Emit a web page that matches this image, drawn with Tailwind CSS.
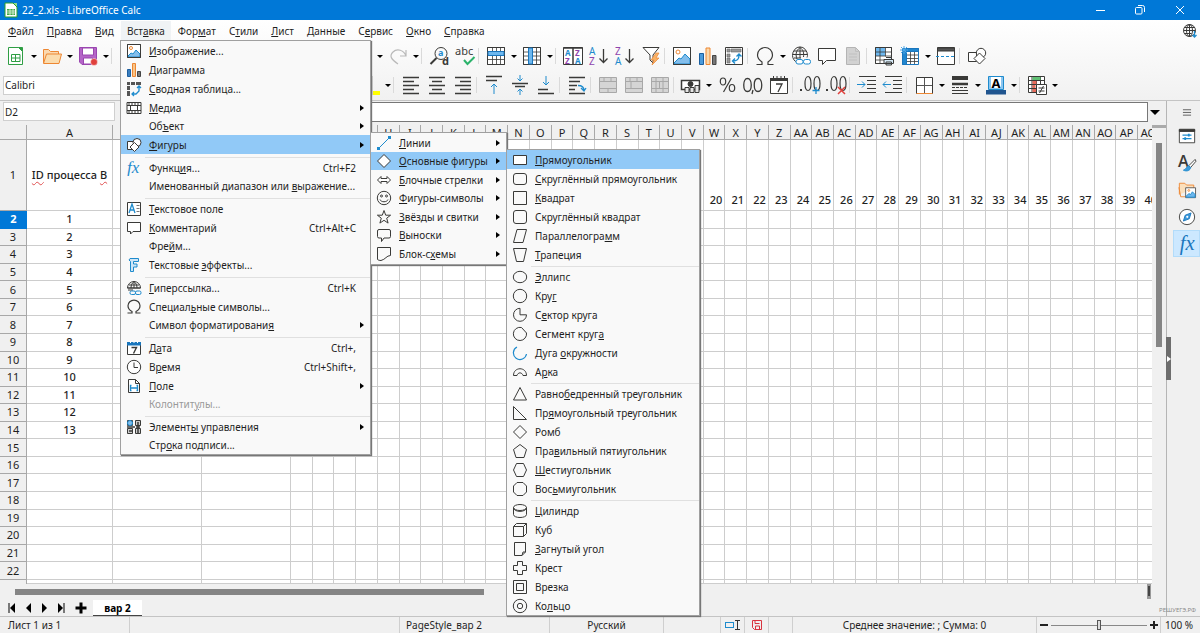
<!DOCTYPE html>
<html lang="ru">
<head>
    <meta charset="UTF-8">
    <meta name="viewport" content="width=device-width, initial-scale=1.0">
    <title>22_2.xls - LibreOffice Calc</title>
    <script src="https://cdn.jsdelivr.net/npm/@tailwindcss/browser@4"></script>
</head>
<body class="h-screen overflow-hidden flex flex-col bg-[#f0f0f0] text-[#1f1f1f] text-[10px] leading-[16px] font-['Noto_Sans','Open_Sans',sans-serif]">
    <!-- Title bar -->
    <header class="h-5 shrink-0 bg-[#0078d7] text-white flex items-center">
        <svg class="ml-1 mr-1 w-3.5 h-4" viewBox="0 0 14 16"><path d="M1 1h8l4 4v10H1z" fill="#fff"/><path d="M9 1h4v4z" fill="#8fdc8f"/><path d="M1 1h8l4 4v10H1z" fill="none" stroke="#2aa02a"/><path d="M3 7h8v6H3z" fill="#43a843"/><path d="M3 9h8M3 11h8M6 7v6M9 7v6" stroke="#fff" stroke-width=".7"/></svg>
        <h1>22_2.xls - LibreOffice Calc</h1>
        <div class="ml-auto flex h-full">
            <button class="w-10 grid place-items-center" aria-label="Свернуть"><svg class="w-3 h-3" viewBox="0 0 12 12"><path d="M2 6.5h9" stroke="#fff"/></svg></button>
            <button class="w-10 grid place-items-center" aria-label="Восстановить"><svg class="w-3 h-3" viewBox="0 0 12 12" fill="none" stroke="#fff"><rect x="1.5" y="3.5" width="6.5" height="6.5" rx="1"/><path d="M4 1.5h4.5a2 2 0 0 1 2 2V8"/></svg></button>
            <button class="w-10 grid place-items-center" aria-label="Закрыть"><svg class="w-3 h-3" viewBox="0 0 12 12"><path d="M2 2l8 8M10 2l-8 8" stroke="#fff"/></svg></button>
        </div>
    </header>

    <!-- Menu bar and toolbars -->
    <div class="shrink-0 bg-linear-to-b from-white to-[#f1f1f1] border-b border-[#c4c4c4]">
        <nav class="flex items-center h-[22px] pl-0.5 relative">
            <div id="menubar" class="flex gap-px h-5"></div>
            <button class="ml-auto mr-0.5" aria-label="Обновления"><svg class="w-4 h-4" viewBox="0 0 16 16" fill="none" stroke="#3a3a38"><circle cx="7.5" cy="7.5" r="6"/><ellipse cx="7.5" cy="7.5" rx="3" ry="6"/><path d="M1.500 7.500h12M2.500 4.500h10M2.500 10.500h7M7.500 1.500v12"/><path d="M12.500 8v6M10.500 12l2 2 2-2" stroke="#1e8bcd" stroke-width="1.300"/></svg></button>
        </nav>
        <div id="toolbar-main" class="flex items-center h-7"></div>
        <div class="flex items-center h-[30px]">
            <input class="ml-[3px] w-[370px] h-[19px] border border-[#cfcfcf] bg-white pl-px outline-none" aria-label="Шрифт" value="Calibri">
            <div id="toolbar-format" class="flex items-center"></div>
        </div>
    </div>

    <!-- Workspace -->
    <div class="flex-1 min-h-0 flex">
        <main class="flex-1 min-w-0 flex flex-col">
            <div class="flex items-start pt-px h-6 shrink-0">
                <input class="ml-[3px] w-[112px] h-[19px] border border-[#cfcfcf] bg-white pl-px outline-none" aria-label="Поле имени" value="D2">
                <span class="w-10"></span>
                <input class="flex-1 h-5 border border-[#777] bg-white outline-none" aria-label="Строка ввода">
                <button class="w-[18px] h-5 pr-1 grid place-items-center" aria-label="Развернуть"><svg class="w-2.5 h-[5px]" viewBox="0 0 10 5"><path d="M0 0h10L5 5z"/></svg></button>
            </div>
            <div class="flex-1 min-h-0 flex">
                <div class="flex-1 min-w-0 overflow-hidden bg-white">
                    <table id="sheet" class="table-fixed border-separate border-spacing-0 w-[calc(100%+8px)] h-[459px] text-[11px]"></table>
                </div>
                <div class="w-[14px] flex flex-col items-center">
                    <span class="w-full h-[3px] bg-[#aaa]"></span>
                    <span class="mt-[15px] w-1.5 h-[204px] bg-[#858585]"></span>
                </div>
            </div>
            <div class="h-[15px] shrink-0 flex items-center">
                <span class="ml-[15px] w-[469px] h-1.5 bg-[#858585]"></span>
                <span class="ml-auto mr-[15px] w-1 h-[15px] bg-[#999] border-x border-[#999]"><i class="block mx-auto mt-0.5 w-0.5 h-2.5 bg-[#444]"></i></span>
            </div>
            <div class="h-[17px] shrink-0 flex items-center">
                <button class="ml-1 w-4 grid place-items-center" aria-label="Первый лист"><svg class="w-2.5 h-2.5" viewBox="0 0 10 10"><path d="M2 0v10" stroke="#000"/><path d="M8 0v10L3 5z"/></svg></button>
                <button class="ml-px w-4 grid place-items-center" aria-label="Предыдущий лист"><svg class="w-2.5 h-2.5" viewBox="0 0 10 10"><path d="M7 0v10L2 5z"/></svg></button>
                <button class="w-4 grid place-items-center" aria-label="Следующий лист"><svg class="w-2.5 h-2.5" viewBox="0 0 10 10"><path d="M2 0v10l5-5z"/></svg></button>
                <button class="w-4 grid place-items-center" aria-label="Последний лист"><svg class="w-2.5 h-2.5" viewBox="0 0 10 10"><path d="M8 0v10" stroke="#000"/><path d="M2 0v10l5-5z"/></svg></button>
                <button class="ml-1 w-4 grid place-items-center" aria-label="Добавить лист"><svg class="w-3 h-3" viewBox="0 0 12 12"><path d="M6 .5v11M.5 6h11" stroke="#000" stroke-width="3"/></svg></button>
                <button class="ml-1 w-[49px] h-4 bg-white border-b border-[#444] font-bold text-black">вар 2</button>
            </div>
        </main>
        <!-- Sidebar -->
        <aside class="relative w-[34px] border-l border-[#b5b5b5] flex flex-col items-end">
            <button class="absolute -left-px top-[236px] w-[5px] h-[43px] bg-[#6d6d6d] grid place-items-center" aria-label="Скрыть панель"><svg class="w-1 h-1.5" viewBox="0 0 4 6"><path d="M0 0v6l4-3z" fill="#fff"/></svg></button>
            <div id="sidebar" class="flex flex-col w-[27px]"></div>
            <span class="absolute right-1 bottom-[2px] text-[6px] leading-[8px] text-[#8a8a8a]">РЕШУЕГЭ.РФ</span>
        </aside>
    </div>

    <!-- Status bar -->
    <footer class="h-[17px] shrink-0 border-t border-[#c4c4c4] flex items-center">
        <span class="w-[130px] pl-2 border-r border-[#cfcfcf]">Лист 1 из 1</span>
        <span class="w-[270px] h-4 border-r border-[#cfcfcf]"></span>
        <span class="w-[150px] pl-1.5 border-r border-[#cfcfcf]">PageStyle_вар 2</span>
        <span class="w-[114px] text-center border-r border-[#cfcfcf]">Русский</span>
        <span class="w-[57px] h-4 border-r border-[#cfcfcf]"></span>
        <span class="w-6 h-4 border-r border-[#cfcfcf] grid place-items-center"><svg class="w-4 h-3" viewBox="0 0 16 12" fill="none"><rect x=".5" y="3.500" width="8" height="5" stroke="#1e8bcd"/><path d="M10 1.500h5M10 10.500h5M12.500 1.500v9" stroke="#333"/></svg></span>
        <span class="w-6 h-4 border-r border-[#cfcfcf] grid place-items-center"><svg class="w-2.5 h-2.5" viewBox="0 0 10 10" fill="none" stroke="#d9333f"><path d="M.5.5h9v9h-7l-2-2zM3 .5v3h4.500M3.500 9V6h4v3"/></svg></span>
        <span class="w-6 h-4 border-r border-[#cfcfcf]"></span>
        <span class="flex-1 text-center border-r border-[#cfcfcf]">Среднее значение: ; Сумма: 0</span>
        <div class="w-[124px] h-4 flex items-center justify-center gap-0.5 border-r border-[#cfcfcf]">
            <button aria-label="Уменьшить"><svg class="w-2.5 h-2.5" viewBox="0 0 10 10"><path d="M1 5h8" stroke="#222" stroke-width="2"/></svg></button>
            <input type="range" value="50" aria-label="Масштаб" class="appearance-none w-24 h-3 bg-transparent bg-linear-to-b from-[#888] to-[#888] bg-size-[100%_1px] bg-center bg-no-repeat [&::-webkit-slider-thumb]:appearance-none [&::-webkit-slider-thumb]:w-1 [&::-webkit-slider-thumb]:h-2.5 [&::-webkit-slider-thumb]:bg-[#ddd] [&::-webkit-slider-thumb]:border [&::-webkit-slider-thumb]:border-[#555]">
            <button aria-label="Увеличить"><svg class="w-2.5 h-2.5" viewBox="0 0 10 10"><path d="M1 5h8M5 1v8" stroke="#222" stroke-width="2"/></svg></button>
        </div>
        <span class="w-[39px] pl-1 whitespace-nowrap">100 %</span>
    </footer>

    <!-- Open menus -->
    <div id="menu-insert" role="menu" class="absolute left-[120px] top-[40px] w-[251px] bg-[#f9f9f9] border border-[#a0a0a0] shadow-[1px_1px_1px_#777]"></div>
    <div id="menu-shapes" role="menu" class="absolute left-[370px] top-[132px] w-[137px] pb-px bg-[#f9f9f9] border border-[#a0a0a0] shadow-[1px_1px_1px_#777]"></div>
    <div id="menu-basic" role="menu" class="absolute left-[506px] top-[149px] w-[194px] bg-[#f9f9f9] border border-[#a0a0a0] shadow-[1px_1px_1px_#777]"></div>

    <script>
        const K = '#3a3a38', B = '#1e8bcd', O = '#ed8733', G = '#a8a8a8';

        // Menu icons, 16x16 box
        const menuIcons = {
            image: `<path d="M1.500 1.500h13v13h-13z" fill="#fff"/><path d="M2 13l3-3 2 1 3-4 4 4v3H2z" fill="#83beec" stroke="${B}"/><circle cx="5" cy="5" r="1.500" fill="#fff" stroke="${O}"/><path d="M1.500 1.500h13v13h-13z"/>`,
            chart: `<path d="M1.500 7.500h3v7h-3z" fill="#3a7fc0" stroke="#1e5f9f"/><path d="M6.500 1.500h3v13h-3z" fill="#f8c58a" stroke="${O}"/><path d="M11.500 9.500h3v5h-3z" fill="#777" stroke="#444"/>`,
            pivot: `<path d="M1 1h3v3H1zM5 1h4v3H5zM10 1h5v3h-5zM1 5h3v4H1zM1 10h3v5H1z" fill="#555" stroke="none"/><path d="M13 5v5l-3 3H6M11 7l2-2 2 2M8 11l-2 2 2 2" stroke="${B}" stroke-width="1.300"/>`,
            media: `<path d="M1 2.500h14v11H1z" fill="#fff"/><path d="M1 5.500h14M1 10.500h14M3 3v2M6 3v2M9 3v2M12 3v2M3 11v2M6 11v2M9 11v2M12 11v2M4.500 6v4M11.500 6v4"/>`,
            shapes: `<path d="M1.500 4.500h7v8h-7z" fill="#fff"/><circle cx="11" cy="5.500" r="4" fill="#fff"/><path d="M8.500 5.500l4.500 4.500-4.500 4.500L4 10z" fill="#fff"/>`,
            fx: `<text x="1" y="13" font-family="Liberation Serif" font-style="italic" font-size="17" fill="${B}" stroke="none">fx</text>`,
            textbox: `<path d="M1.500 1.500h13v13h-13z" fill="#fff"/><path d="M3 12l3-9 3 9M4 9h4" stroke="${B}" stroke-width="1.300"/><path d="M10.500 4.500h3M10.500 7.500h3M10.500 10.500h3" stroke="#777"/>`,
            comment: `<path d="M1.500 2.500h13v9H7L4.500 14v-2.500h-3z" fill="#fff"/>`,
            fontwork: `<path d="M4 1.500h8.500v3H7.500v2.500H11v3H7.500v4.500H4.500v-10L3 3z" fill="#cfe6f7" stroke="${B}"/>`,
            link: `<path d="M1.500 8a6.500 6.500 0 0 1 13 0zM1.500 8h13M3 5h10M8 1.500V8M5 8c0-3 1-5 3-6.500 2 1.500 3 3.500 3 6.500M2 10h5"/><rect x="4" y="11" width="5.500" height="3.500" rx="1.500" stroke="${B}"/><rect x="9.500" y="11" width="5.500" height="3.500" rx="1.500" stroke="${B}"/>`,
            omega: `<path d="M1.500 14h4.500v-1.500C3 11 2 9 2 6.800a6 5.700 0 0 1 12 0C14 9 13 11 10 12.500V14h4.500" stroke-width="1.200"/>`,
            date: `<path d="M1.500 3.500h13v11h-13z" fill="#fff"/><path d="M1 2h14v3.500H1z" fill="#1a76bd" stroke="none"/><path d="M4.500 1v2M8 1v2M11.500 1v2" stroke="#fff"/><path d="M5.500 7.500h5l-3 6" stroke-width="1.400"/>`,
            clock: `<circle cx="8" cy="8" r="6.700" fill="#fff"/><path d="M8 3.500V8.500h4"/>`,
            field: `<path d="M2.500 1.500h7l4 4v9h-11z" fill="#fff"/><path d="M9.500 1.500v4h4"/><path d="M5.500 7.500h-1v5h1M10.500 7.500h1v5h-1M5 10h6" stroke="${B}" stroke-width="1.300"/>`,
            controls: `<path d="M1.500 1.500h5v5h-5zM1.500 9.500h5v5h-5zM9.500 1.500h5v5h-5zM9.500 9.500h5v5h-5z" fill="#ccc"/><circle cx="4" cy="4" r="2.500" fill="#83beec" stroke="${B}"/><path d="M12 3v11M10 8h4M3 12h3M1 8h8" stroke-width="1.500"/>`,
            line: `<path d="M2.500 13.500l11-11" stroke="${B}"/><path d="M1 12h3v3H1zM12 1h3v3h-3z" fill="${B}" stroke="none"/>`,
            diamond: `<path d="M8 1.500L14.500 8 8 14.500 1.500 8z" fill="#fff"/>`,
            arrows: `<path d="M1.500 8L5 4.500V6.500h6V4.500L14.500 8 11 11.500v-2H5v2z" fill="#fff"/>`,
            smiley: `<circle cx="8" cy="8" r="6.700"/><circle cx="5.500" cy="6" r="1"/><circle cx="10.500" cy="6" r="1"/><path d="M4 9.500c1 3 7 3 8 0"/>`,
            star: `<path d="M8 1.500l1.700 4.700h4.900l-3.900 3 1.400 4.900L8 11.300l-4.100 2.800 1.400-4.900-3.900-3h4.900z"/>`,
            callout: `<path d="M3 2.500h10a1.500 1.500 0 0 1 1.500 1.500v5.500A1.500 1.500 0 0 1 13 11H8l-2.500 3.500V11H3a1.500 1.500 0 0 1-1.500-1.500V4A1.500 1.500 0 0 1 3 2.500z"/>`,
            flow: `<path d="M1.500 1.500h13v8c-4 0-5 4-9.500 5-1.500 0-3-.5-3.500-1z"/>`,
            rect: `<path d="M1.500 3.500h13v9h-13z" fill="#fff"/>`,
            rrect: `<rect x="1.500" y="2.500" width="13" height="11" rx="2.500"/>`,
            square: `<path d="M1.500 1.500h13v13h-13z"/>`,
            rsquare: `<rect x="1.500" y="1.500" width="13" height="13" rx="2.500"/>`,
            para: `<path d="M5 1.500h9.500L11 14.500H1.500z"/>`,
            trap: `<path d="M1.500 1.500h13l-3 13h-7z"/>`,
            ellipse: `<ellipse cx="8" cy="8" rx="6.700" ry="5.700"/>`,
            circle: `<circle cx="8" cy="8" r="6.700"/>`,
            pie: `<path d="M8 1.500a6.500 6.500 0 1 0 6.500 6.500H8z" transform="translate(0 -.2)"/>`,
            segment: `<path d="M9.500 1.500a6.600 6.600 0 1 0 5 5.500z"/>`,
            arc: `<path d="M5 2a6.600 6.600 0 1 0 9.500 7" stroke="${B}" stroke-width="1.200"/>`,
            arch: `<path d="M1.500 11.500c0-9 13-9 13 0h-3.500c-1-3.500-5-3.500-6 0z"/>`,
            tri: `<path d="M8 1.500l6.500 12.500h-13z"/>`,
            rtri: `<path d="M1.500 1.500v13h13z"/>`,
            rhomb: `<path d="M8 1.500L14.500 8 8 14.500 1.500 8z"/>`,
            penta: `<path d="M8 1.500l6.500 5-2.500 8H4l-2.500-8z"/>`,
            hexa: `<path d="M4.500 1.500h7L14.500 8l-3 6.500h-7L1.500 8z"/>`,
            octa: `<path d="M5 1.500h6L14.500 5v6L11 14.500H5L1.500 11V5z"/>`,
            cylinder: `<ellipse cx="8" cy="4.500" rx="6.500" ry="3"/><path d="M1.500 4.500v7c0 4 13 4 13 0v-7M1.500 5c1 4.500 12 4.500 13 0"/>`,
            cube: `<path d="M1.500 4.500h10v10h-10zM1.500 4.500l3-3h10v10l-3 3M11.500 4.500l3-3"/>`,
            fold: `<path d="M2.500 1.500h11V11L10 14.500H2.500zM13.500 11H11l-1 3.500"/>`,
            cross: `<path d="M5.500 1.500h5v4h4v5h-4v4h-5v-4h-4v-5h4z"/>`,
            frame: `<path d="M1.500 1.500h13v13h-13zM4.500 4.500h7v7h-7z"/>`,
            ring: `<circle cx="8" cy="8" r="6.700"/><circle cx="8" cy="8" r="2.700"/>`
        };

        // Toolbar icons, 20x20 box
        const toolIcons = {
            newdoc: `<path d="M2.500 1.500h10l4 4v13h-14z" fill="#fff" stroke="#2f9e44"/><path d="M12.500 1.500h4v4z" fill="#2f9e44" stroke="#2f9e44"/><path d="M5.500 8.500h8.500v7H5.500zM5.500 12h8.500M9.500 8.500v7" stroke="#2f9e44"/>`,
            open: `<path d="M1.500 17V3.500h5l2 2h8v3" fill="#fbd9b0" stroke="${O}"/><path d="M1.500 17.500l3-9.500h15l-2.500 9.500z" fill="#fbdcae" stroke="${O}"/>`,
            save: `<path d="M1.500 1.500h17v17H4L1.500 16z" fill="#b565c8" stroke="#9a46b0"/><path d="M4.500 2h11v7h-11z" fill="#fff" stroke="#9a46b0"/><path d="M5.500 12h9v6h-9z" fill="#fff" stroke="#9a46b0"/><circle cx="16" cy="16" r="3.500" fill="#e0403c" stroke="#fff" stroke-width=".5"/>`,
            redo: `<path d="M18 4v6h-6M18 10c-2-6-9-8-13-4-4 4-2 7 5 12" stroke="#b9b9b9" stroke-width="1.200"/>`,
            find: `<circle cx="12" cy="7.500" r="6"/><path d="M7.500 12l-6 6" stroke-width="2"/><text x="9" y="10" font-size="9" font-weight="bold" fill="${B}" stroke="none">a</text><text x="13" y="19" font-size="11" font-weight="bold" fill="${K}" stroke="none">d</text>`,
            spell: `<text x="0" y="9" font-size="11" fill="${K}" stroke="none">abc</text><path d="M9 14l3.500 4 7-7" stroke="#2bb36b" stroke-width="2"/>`,
            rowIns: `<path d="M1.500 1.500h17v17h-17z" fill="#fff"/><path d="M1.500 13.500h17M6.500 1.500v17M10.500 1.500v17M14.500 1.500v17M1.500 1.500h17v17h-17z" stroke-width=".8"/><path d="M2 5.500h16v4H2z" fill="#6db7ee" stroke="#1a76bd"/>`,
            colIns: `<path d="M1.500 1.500h17v17h-17z" fill="#fff"/><path d="M14.500 1.500v17M1.500 6h17M1.500 10h17M1.500 14h17M1.500 1.500h17v17h-17z" stroke-width=".8"/><path d="M6.500 2h4v16h-4z" fill="#6db7ee" stroke="#1a76bd"/>`,
            sort: `<path d="M.5 1.500h19v17H.5z" fill="#fff"/><path d="M.5 2h19M10 2v16" stroke-width="1.500"/><g font-size="8" font-weight="bold" stroke="none"><text x="2" y="10" fill="${B}">A</text><text x="2" y="17.500" fill="#8e44ad">Z</text><text x="12" y="10" fill="#8e44ad">Z</text><text x="12" y="17.500" fill="${B}">A</text></g>`,
            sortAsc: `<g font-size="10" stroke="none"><text x="0" y="9" fill="${B}">A</text><text x="0" y="19" fill="#8e44ad">Z</text></g><path d="M14.500 3v13.500M10.500 12.500l4 4 4-4" stroke-width="1.300"/>`,
            sortDesc: `<g font-size="10" stroke="none"><text x="0" y="9" fill="#8e44ad">Z</text><text x="0" y="19" fill="${B}">A</text></g><path d="M14.500 3v13.500M10.500 12.500l4 4 4-4" stroke-width="1.300"/>`,
            filter: `<path d="M2 1.500h16L12 9v8l-3-3V9z" fill="#fff"/><path d="M15 7l-5 7h3l-2 5 7-7h-3l3-5z" fill="#f9b266" stroke="${O}" stroke-width=".7"/>`,
            image: `<path d="M1.500 1.500h17v17h-17z" fill="#fff"/><path d="M2 17l5-5 2 1 4-5 5 5v5H2z" fill="#83beec" stroke="${B}"/><circle cx="6" cy="6" r="2" stroke="${O}"/><path d="M1.500 1.500h17v17h-17z"/>`,
            chart: `<path d="M1.500 7.500h4v11h-4z" fill="#4a9adb" stroke="#1a5f9f"/><path d="M8 2h4v16.500H8z" fill="#fcd9ab" stroke="${O}"/><path d="M14.500 9.500h3.500v9h-3.500z" fill="#777" stroke="#444"/>`,
            pivot: `<path d="M1.500 1.500h17v17h-17z" fill="#fff"/><path d="M3 3h3v3H3zM7 3h10v3H7zM3 8h3v3H3zM3 12h3v5H3z" fill="#999" stroke="#666" stroke-width=".6"/><path d="M9 15c5 0 6-2 6-6M12.500 10.500L15 8l2.500 2.500M11 12.500L8.500 15l2.500 2.500" stroke="${B}" stroke-width="1.400"/>`,
            omega: `<path d="M1.500 18.500H7V16C4 14 2.500 12 2.500 9a7.500 7.500 0 0 1 15 0c0 3-1.500 5-4.500 7v2.500h5.500" stroke-width="1.200"/>`,
            link: `<path d="M1.500 9.500a7 8 0 0 1 15 0 7 7 0 0 1-.5 2M1.500 9.500c0 3 2 6 5 7M1.500 8.500h15M3 5h12M3 12h7M9 1.500V12M6 13c-1.500-4-1.500-8 3-11.500C12.500 4 13 7 12.500 11"/><rect x="5" y="13.500" width="7" height="4.500" rx="2" fill="#fff" stroke="${B}"/><rect x="12.500" y="13.500" width="7" height="4.500" rx="2" fill="#fff" stroke="${B}"/>`,
            comment: `<path d="M1.500 2.500h17v12H9.500L5.500 18.500v-4h-4z" fill="#fff"/>`,
            doc: `<path d="M3.500 1.500h9l4 4v13h-13z" fill="#d2d2d2" stroke="#b4b4b4"/><path d="M12.500 1.500v4h4M6 8h8M6 11h8M6 14h8" stroke="#c0c0c0"/>`,
            print: `<path d="M1.500 1.500h16v16h-16z" fill="#fff"/><path d="M2 2h9v8H2z" fill="#6db7ee" stroke="none"/><path d="M1.500 6h16M1.500 10h16M1.500 14h9M6 1.500v16M11.500 1.500v9M17.500 1.500v10M1.500 1.500h16M1.500 1.500v16h9" stroke-width=".8"/><path d="M10 13.500h9.500v4H10zM12 11.500h5.500v2M12 16h5.500v3H12z" fill="#d6eaf8"/>`,
            freeze: `<path d="M2.500 2.500h16v16h-16z" fill="#fff" stroke="#1a76bd"/><path d="M2.500 2.500h16v3h-16zM2.500 2.500h4v16h-4z" fill="#2186cf" stroke="#1a76bd"/><path d="M7 9h11M7 12.500h11M7 15.500h11M10.500 6v12M14.500 6v12" stroke-width=".8"/><path d="M4 0v8M0 4h8M1 1l6 6M7 1L1 7" stroke="#4fa8e8"/>`,
            split: `<path d="M1.500 1.500h17v17h-17z" fill="#fff"/><path d="M1.500 2h17v3h-17z" fill="#555"/><path d="M0 10.500h20" stroke="${B}" stroke-dasharray="3 2"/>`,
            shapes: `<path d="M1.500 6.500h8v9h-8z" fill="#fff"/><circle cx="14" cy="7" r="4.700" fill="#fff"/><path d="M12.500 7l5.500 5.500-5.500 5.500L7 12.500z" fill="#fff"/>`,
            left: `<path d="M2 2.500h16M2 6.500h11M2 10.500h16M2 14.500h11M2 18.500h16" stroke-width="1.300"/>`,
            center: `<path d="M2 2.500h16M5 6.500h10M2 10.500h16M5 14.500h10M2 18.500h16" stroke-width="1.300"/>`,
            right: `<path d="M2 2.500h16M7 6.500h11M2 10.500h16M7 14.500h11M2 18.500h16" stroke-width="1.300"/>`,
            top: `<path d="M2 1.500h16M2 5.500h11" stroke-width="1.300"/><path d="M10 19V9M7 12l3-3 3 3" stroke="${B}"/>`,
            middle: `<path d="M2 8.500h16M5 11.500h10" stroke-width="1.300"/><path d="M10 0v6M7.500 3.500L10 6l2.500-2.500M10 20v-6M7.500 16.500L10 14l2.500 2.500" stroke="${B}"/>`,
            bottom: `<path d="M2 14.500h10M2 18.500h16" stroke-width="1.300"/><path d="M10 1v9M7 7l3 3 3-3" stroke="${B}"/>`,
            wrap: `<path d="M2 2.500h16M2 6.500h11M2 10.500h8M2 14.500h6M2 18.500h16" stroke-width="1.300"/><path d="M11 10.500c4 0 6 2 6 5M14 13l3 3 2-3" stroke="${B}" stroke-width="1.300"/>`,
            merge: `<path d="M1.500 2.500h17v15h-17z" fill="#d5d5d5" stroke="${G}"/><path d="M1.500 6.500h17M1.500 13.500h17M6 2.500v4M13 2.500v4M10 13.500v4" stroke="${G}"/>`,
            mergeOnly: `<path d="M1.500 2.500h17v15h-17z" fill="#d5d5d5" stroke="${G}"/><path d="M1.500 6.500h17M1.500 13.500h17M6 2.500v4M13 2.500v4M7 6.500v7" stroke="${G}"/>`,
            unmerge: `<path d="M1.500 2.500h17v15h-17z" fill="#d5d5d5" stroke="${G}"/><path d="M1.500 6.500h17M1.500 13.500h17M6 2.500v15M13 2.500v15M9.500 6.500v7" stroke="${G}"/>`,
            money: `<path d="M.5 5.500h18v9H.5z" fill="#fff" stroke-width="1.500"/><circle cx="9.500" cy="9" r="2.500" fill="${K}"/><path d="M4 12.500h4v5H4zM9 12.500h4v5H9zM14 10.500h4v7h-4z" fill="#e4e4e4"/>`,
            percent: `<ellipse cx="6" cy="6.500" rx="2.700" ry="3.500" stroke-width="1.200"/><ellipse cx="15" cy="13" rx="2.700" ry="3.500" stroke-width="1.200"/><path d="M14.500 3L6.500 17" stroke-width="1.200"/>`,
            number: `<path d="M4.500 3.500c-5 0-5 13 0 13s5-13 0-13zM15 3.500c-5 0-5 13 0 13s5-13 0-13zM10 15l-1 4" stroke-width="1.300"/>`,
            date: `<path d="M1.500 3.500h17v15h-17z" fill="#fff"/><path d="M1 3h18v3H1z" fill="${K}" stroke="none"/><path d="M4.500 1v3M8 1v3M12 1v3M15.500 1v3" /><path d="M7 9h6l-4 8" stroke-width="1.300"/>`,
            decAdd: `<path d="M8 1.500c-4 0-4 14 0 14s4-14 0-14zM17 1.500c-4 0-4 14 0 14s4-14 0-14z" stroke-width="1.200"/><path d="M0 14h2v2H0z" fill="${K}" stroke="none"/><path d="M16 12v7M12.500 15.500h7" stroke="${B}" stroke-width="1.300"/>`,
            decDel: `<path d="M8 1.500c-4 0-4 14 0 14s4-14 0-14zM17 1.500c-4 0-4 14 0 14s4-14 0-14z" stroke-width="1.200"/><path d="M0 14h2v2H0z" fill="${K}" stroke="none"/><path d="M12 12l7 7M19 12l-7 7" stroke="#e0403c" stroke-width="1.500"/>`,
            indent: `<path d="M2 1.500h17M10 5.500h9M10 9.500h9M10 13.500h9M2 17.500h17" stroke-width="1.200"/><path d="M0 9.500h8M5 6.500l3 3-3 3" stroke="${B}"/>`,
            outdent: `<path d="M2 1.500h17M10 5.500h9M10 9.500h9M10 13.500h9M2 17.500h17" stroke-width="1.200"/><path d="M0 9.500h8M3 6.500l-3 3 3 3" stroke="${B}"/>`,
            borders: `<path d="M2.500 2.500h16v16h-16z" fill="#fff"/><path d="M10.500 3v15M3 10.500h15" stroke="#555"/><path d="M2.500 18.500h16" stroke="${O}"/>`,
            lines: `<path d="M2 3h16" stroke-width="4"/><path d="M2 9h16" stroke-width="2.500"/><path d="M2 12.500h16" stroke-dasharray="3 1"/><path d="M2 15.500h16M2 18.500h16" stroke-width="1.200"/>`,
            borderColor: `<path d="M2.500 1.500h15v13h-15z" fill="#8cc6f0" stroke="${B}"/><path d="M5 2h10v11H5z" fill="#fff" stroke="none"/><text x="5.500" y="12.500" font-size="13" font-weight="bold" fill="#000" stroke="none">A</text><path d="M0 15h20v4.500H0z" fill="#20558f" stroke="none"/>`,
            condfmt: `<path d="M1.500 1.500h16v16h-16z" fill="#fff"/><path d="M1.500 5.500h16M1.500 9.500h16M1.500 13.500h8M5 1.500v16M9.500 5.500v12M13.500 1.500v8"/><path d="M5.500 2h8v3h-8z" fill="#5fbf73" stroke="none"/><path d="M5.500 6h4v3h-4zM5.500 14h4v3h-4zM5.500 10h3v3h-3z" fill="#e86a5a" stroke="none"/><path d="M9.500 9.500h10v10h-10z" fill="#fff"/><path d="M11.500 13h6M11.500 16h6M16.500 11l-4 7"/>`,
            hamburger: `<path d="M5.500 7.500h9M5.500 10.500h9M5.500 13.500h9" stroke="#555"/>`,
            props: `<path d="M1.500 2.500h17v15h-17z" fill="#fff"/><path d="M1.500 3h17v2h-17z" fill="${K}"/><path d="M5 9h10M5 13h10" stroke="${B}" stroke-width="1.300"/><path d="M12 7.500v3M8 11.500v3" stroke="${B}" stroke-width="2"/>`,
            styles: `<text x="0" y="14" font-size="18" font-family="Open Sans" font-weight="600" fill="${K}" stroke="none">A</text><path d="M19 6l-7 7 2 2 6-7z" fill="#fff"/><path d="M12 13c-3 0-2 4-6 5 4 2 8 0 8-3z" fill="#3d9adb" stroke="${B}"/>`,
            gallery: `<path d="M1.500 15V2.500h6l2 2h8v4" fill="#fbe0bd" stroke="${O}"/><path d="M1 7l2 10.500h6" stroke="${O}"/><path d="M8.500 7.500h11v11h-11z" fill="#fff" stroke="#555"/><path d="M9 17l3-3 2 1 2-3 3 3v3H9z" fill="#6db7ee" stroke="${B}"/><circle cx="12" cy="10.500" r="1" stroke="${O}"/>`,
            navigator: `<circle cx="10" cy="10" r="8.500" fill="#fff"/><path d="M14.500 5.500l-2 6.500-6.500 2.500L8 8z" fill="#3d9adb" stroke="#1a76bd"/><circle cx="10.300" cy="9.800" r="1.200" fill="#fff" stroke="none"/>`,
            fx: `<text x="2" y="17" font-size="23" font-family="Liberation Serif" font-style="italic" fill="#1a76bd" stroke="none">fx</text>`
        };

        const svg = (markup, box, cls) => `<svg class="${cls}" viewBox="0 0 ${box} ${box}" fill="none" stroke="${K}">${markup}</svg>`;
        // "_" marks the access key letter
        const label = (s) => s.replace(/_(.)/, '<u class="underline-offset-1">$1</u>');

        // --- Menu bar ---
        document.getElementById('menubar').innerHTML =
            ['_Файл', '_Правка', '_Вид', 'Вст_авка', 'Фор_мат', 'С_тили', '_Лист', '_Данные', 'С_ервис', '_Окно', '_Справка']
                .map((m) => `<button class="${m === 'Вст_авка' ? 'px-1.5 bg-[#f0f3f5]' : 'px-1.5'}">${label(m)}</button>`).join('');

        // --- Toolbars: "|" is a separator, a trailing "+" adds a drop-down arrow ---
        const arrow = '<button class="w-2.5 h-5 grid place-items-center" aria-label="Ещё"><svg class="w-1.5 h-[3px]" viewBox="0 0 6 3"><path d="M0 0h6L3 3z"/></svg></button>';
        function toolbar(spec) {
            return spec.split(' ').map((name) => {
                if (name === '|') return '<span class="w-[5px] h-4 border-l border-[#dadada]"></span>';
                const drop = name.endsWith('+');
                const id = drop ? name.slice(0, -1) : name;
                return `<button class="w-[26px] h-5 grid place-items-center" aria-label="${id}">${svg(toolIcons[id], 20, 'w-5 h-5 overflow-visible')}</button>` + (drop ? arrow : '');
            }).join('');
        }
        document.getElementById('toolbar-main').innerHTML =
            '<span class="w-[3px]"></span>' + toolbar('newdoc+ open+ save+ |') +
            '<span class="w-[259px]"></span>' + arrow + toolbar('redo+ | find spell | rowIns+ colIns+ | sort sortAsc sortDesc filter | image chart pivot | omega+ link comment doc | print freeze+ split | shapes');
        document.getElementById('toolbar-format').innerHTML =
            '<span class="w-[7px] h-1 mt-4 bg-[#ffff00]"></span><span class="w-[3px]"></span>' + arrow +
            toolbar('| left center right | top middle bottom | wrap | merge mergeOnly unmerge | money+ percent number date | decAdd decDel | indent outdent | borders+ lines+ borderColor+ | condfmt+');

        // --- Sidebar ---
        document.getElementById('sidebar').innerHTML = ['hamburger', 'props', 'styles', 'gallery', 'navigator', 'fx']
            .map((n) => {
                const cls = n === 'hamburger' ? 'h-[21px] grid place-items-center' : n === 'fx' ? 'h-[27px] grid place-items-center bg-[#cce8ff] border border-[#b3dcfa]' : 'h-[27px] grid place-items-center';
                return `<button class="${cls}" aria-label="${n}">${svg(toolIcons[n], 20, 'w-[18px] h-[18px] overflow-visible')}</button>`;
            }).join('');

        // --- Sheet ---
        function colName(i) {
            return i < 26 ? String.fromCharCode(65 + i) : 'A' + String.fromCharCode(39 + i);
        }
        const COLS = 43;
        let html = '<colgroup><col class="w-[27px]"><col class="w-[86px]"><col class="w-[89px]"><col class="w-[89px]">' + '<col>'.repeat(COLS - 3) + '</colgroup>';
        html += '<thead><tr class="h-[15px]"><th class="bg-[#f0f0f0] border-r border-b border-[#a8a8a8]"></th>';
        for (let c = 0; c < COLS; c++) html += `<th class="p-0 h-[15px] leading-[13px] font-normal bg-[#f0f0f0] border-r border-b border-[#a8a8a8]">${colName(c)}</th>`;
        html += '</tr></thead><tbody>';
        for (let r = 1; r <= 23; r++) {
            html += r === 1 ? '<tr class="h-[71px]">' : r === 23 ? '<tr class="h-1">' : '<tr>';
            html += `<th class="${r === 23 ? 'p-0 bg-[#f0f0f0] border-r border-[#a8a8a8]' : r === 2 ? 'p-0 leading-[12px] font-bold text-white bg-[#0078d7] border-b border-[#0078d7]' : 'p-0 leading-[12px] font-normal bg-[#f0f0f0] border-r border-b border-[#a8a8a8]'}">${r < 23 ? r : ''}</th>`;
            for (let c = 0; c < COLS; c++) {
                let text = '';
                let cls = 'p-0 border-r border-b border-[#cdcdcd]';
                if (c === 0 && r === 1) {
                    text = '<span class="underline decoration-wavy decoration-[#e05050] decoration-1 underline-offset-2">ID</span> процесса <span class="underline decoration-wavy decoration-[#e05050] decoration-1 underline-offset-2">В</span>';
                    cls = 'p-0 border-r border-b border-[#cdcdcd] text-center whitespace-nowrap leading-[12px] font-medium';
                } else if (c === 0 && r <= 14) {
                    text = r - 1;
                    cls = 'p-0 border-r border-b border-[#cdcdcd] text-center leading-[12px] font-medium';
                } else if (r === 1 && c > 21) {
                    text = c - 2;
                    cls = 'p-0 pr-0.5 pb-[3px] border-r border-b border-[#cdcdcd] text-right align-bottom leading-[14px] font-medium';
                }
                html += `<td class="${cls}">${text}</td>`;
            }
            html += '</tr>';
        }
        document.getElementById('sheet').innerHTML = html + '</tbody>';

        // --- Menus: [icon, label, shortcut or ">" , state] ---
        const insertMenu = [
            ['image', '_Изображение...'], ['chart', '_Диаграмма'], ['pivot', '_Сводная таблица...'], ['media', '_Медиа', '>'],
            ['', 'Об_ъект', '>'], ['shapes', '_Фигуры', '>', 'on'], null,
            ['fx', 'Функц_ия...', 'Ctrl+F2'], ['', 'Именованный диапазон или _выражение...'], null,
            ['textbox', '_Текстовое поле'], ['comment', '_Комментарий', 'Ctrl+Alt+C'], ['', 'Фре_йм...'], ['fontwork', 'Текстовые _эффекты...'], null,
            ['link', '_Гиперссылка...', 'Ctrl+K'], ['omega', 'Специал_ьные символы...'], ['', 'Символ форматировани_я', '>'], null,
            ['date', 'Д_ата', 'Ctrl+,'], ['clock', 'В_ремя', 'Ctrl+Shift+,'], ['field', '_Поле', '>'], ['', 'Колонтит_улы...', '', 'off'], null,
            ['controls', 'Элемент_ы управления', '>'], ['', 'Стр_ока подписи...']
        ];
        const shapesMenu = [
            ['line', '_Линии', '>'], ['diamond', '_Основные фигуры', '>', 'on'], ['arrows', '_Блочные стрелки', '>'], ['smiley', '_Фигуры-символы', '>'],
            ['star', '_Звёзды и свитки', '>'], ['callout', '_Выноски', '>'], ['flow', 'Блок-с_хемы', '>']
        ];
        const basicMenu = [
            ['rect', '_Прямоугольник', '', 'on'], ['rrect', '_Скруглённый прямоугольник'], ['square', '_Квадрат'], ['rsquare', 'Скруглённый ква_драт'], ['para', 'Параллелогра_мм'], ['trap', '_Трапеция'], null,
            ['ellipse', '_Эллипс'], ['circle', 'Кру_г'], ['pie', 'С_ектор круга'], ['segment', 'Сегмент круг_а'], ['arc', 'Дуга _окружности'], ['arch', 'А_рка'], null,
            ['tri', 'Равно_бедренный треугольник'], ['rtri', 'Пр_ямоугольный треугольник'], ['rhomb', 'Ромб'], ['penta', 'Пра_вильный пятиугольник'], ['hexa', '_Шестиугольник'], ['octa', 'Вос_ьмиугольник'], null,
            ['cylinder', '_Цилиндр'], ['cube', 'Куб'], ['fold', '_Загнутый угол'], ['cross', 'Крест'], ['frame', 'Врезка'], ['ring', 'Ко_льцо']
        ];
        function renderMenu(id, items, iconRow, plainRow, sepRow) {
            document.getElementById(id).innerHTML = items.map((item) => {
                if (!item) return `<div class="${sepRow}" role="separator"></div>`;
                const [icon, text, extra, state] = item;
                const tone = state === 'on' ? 'bg-[#91c9f7]' : state === 'off' ? 'text-[#9a9a9a]' : '';
                const pic = icon ? svg(menuIcons[icon], 16, 'w-4 h-4 shrink-0') : '<span class="w-4 shrink-0"></span>';
                const tail = extra === '>'
                    ? '<svg class="ml-auto mr-0.5 w-1 h-1.5 shrink-0" viewBox="0 0 4 6"><path d="M0 0v6l4-3z"/></svg>'
                    : extra ? `<span class="ml-auto mr-2.5">${extra}</span>` : '';
                return `<button role="menuitem" class="flex items-center gap-[7px] w-full pl-[5px] pr-1 whitespace-nowrap ${icon ? iconRow : plainRow} ${tone}">${pic}<span>${label(text)}</span>${tail}</button>`;
            }).join('');
        }
        renderMenu('menu-insert', insertMenu, 'h-[19px]', 'h-[18px]', 'h-1 ml-6 border-b border-[#e0e0e0]');
        renderMenu('menu-shapes', shapesMenu, 'h-[19px] even:h-[18px]', 'h-[18px]', 'h-1');
        renderMenu('menu-basic', basicMenu, 'h-[19px]', 'h-[19px]', 'h-[3px] ml-6 border-b border-[#e0e0e0]');
    </script>
</body>
</html>
